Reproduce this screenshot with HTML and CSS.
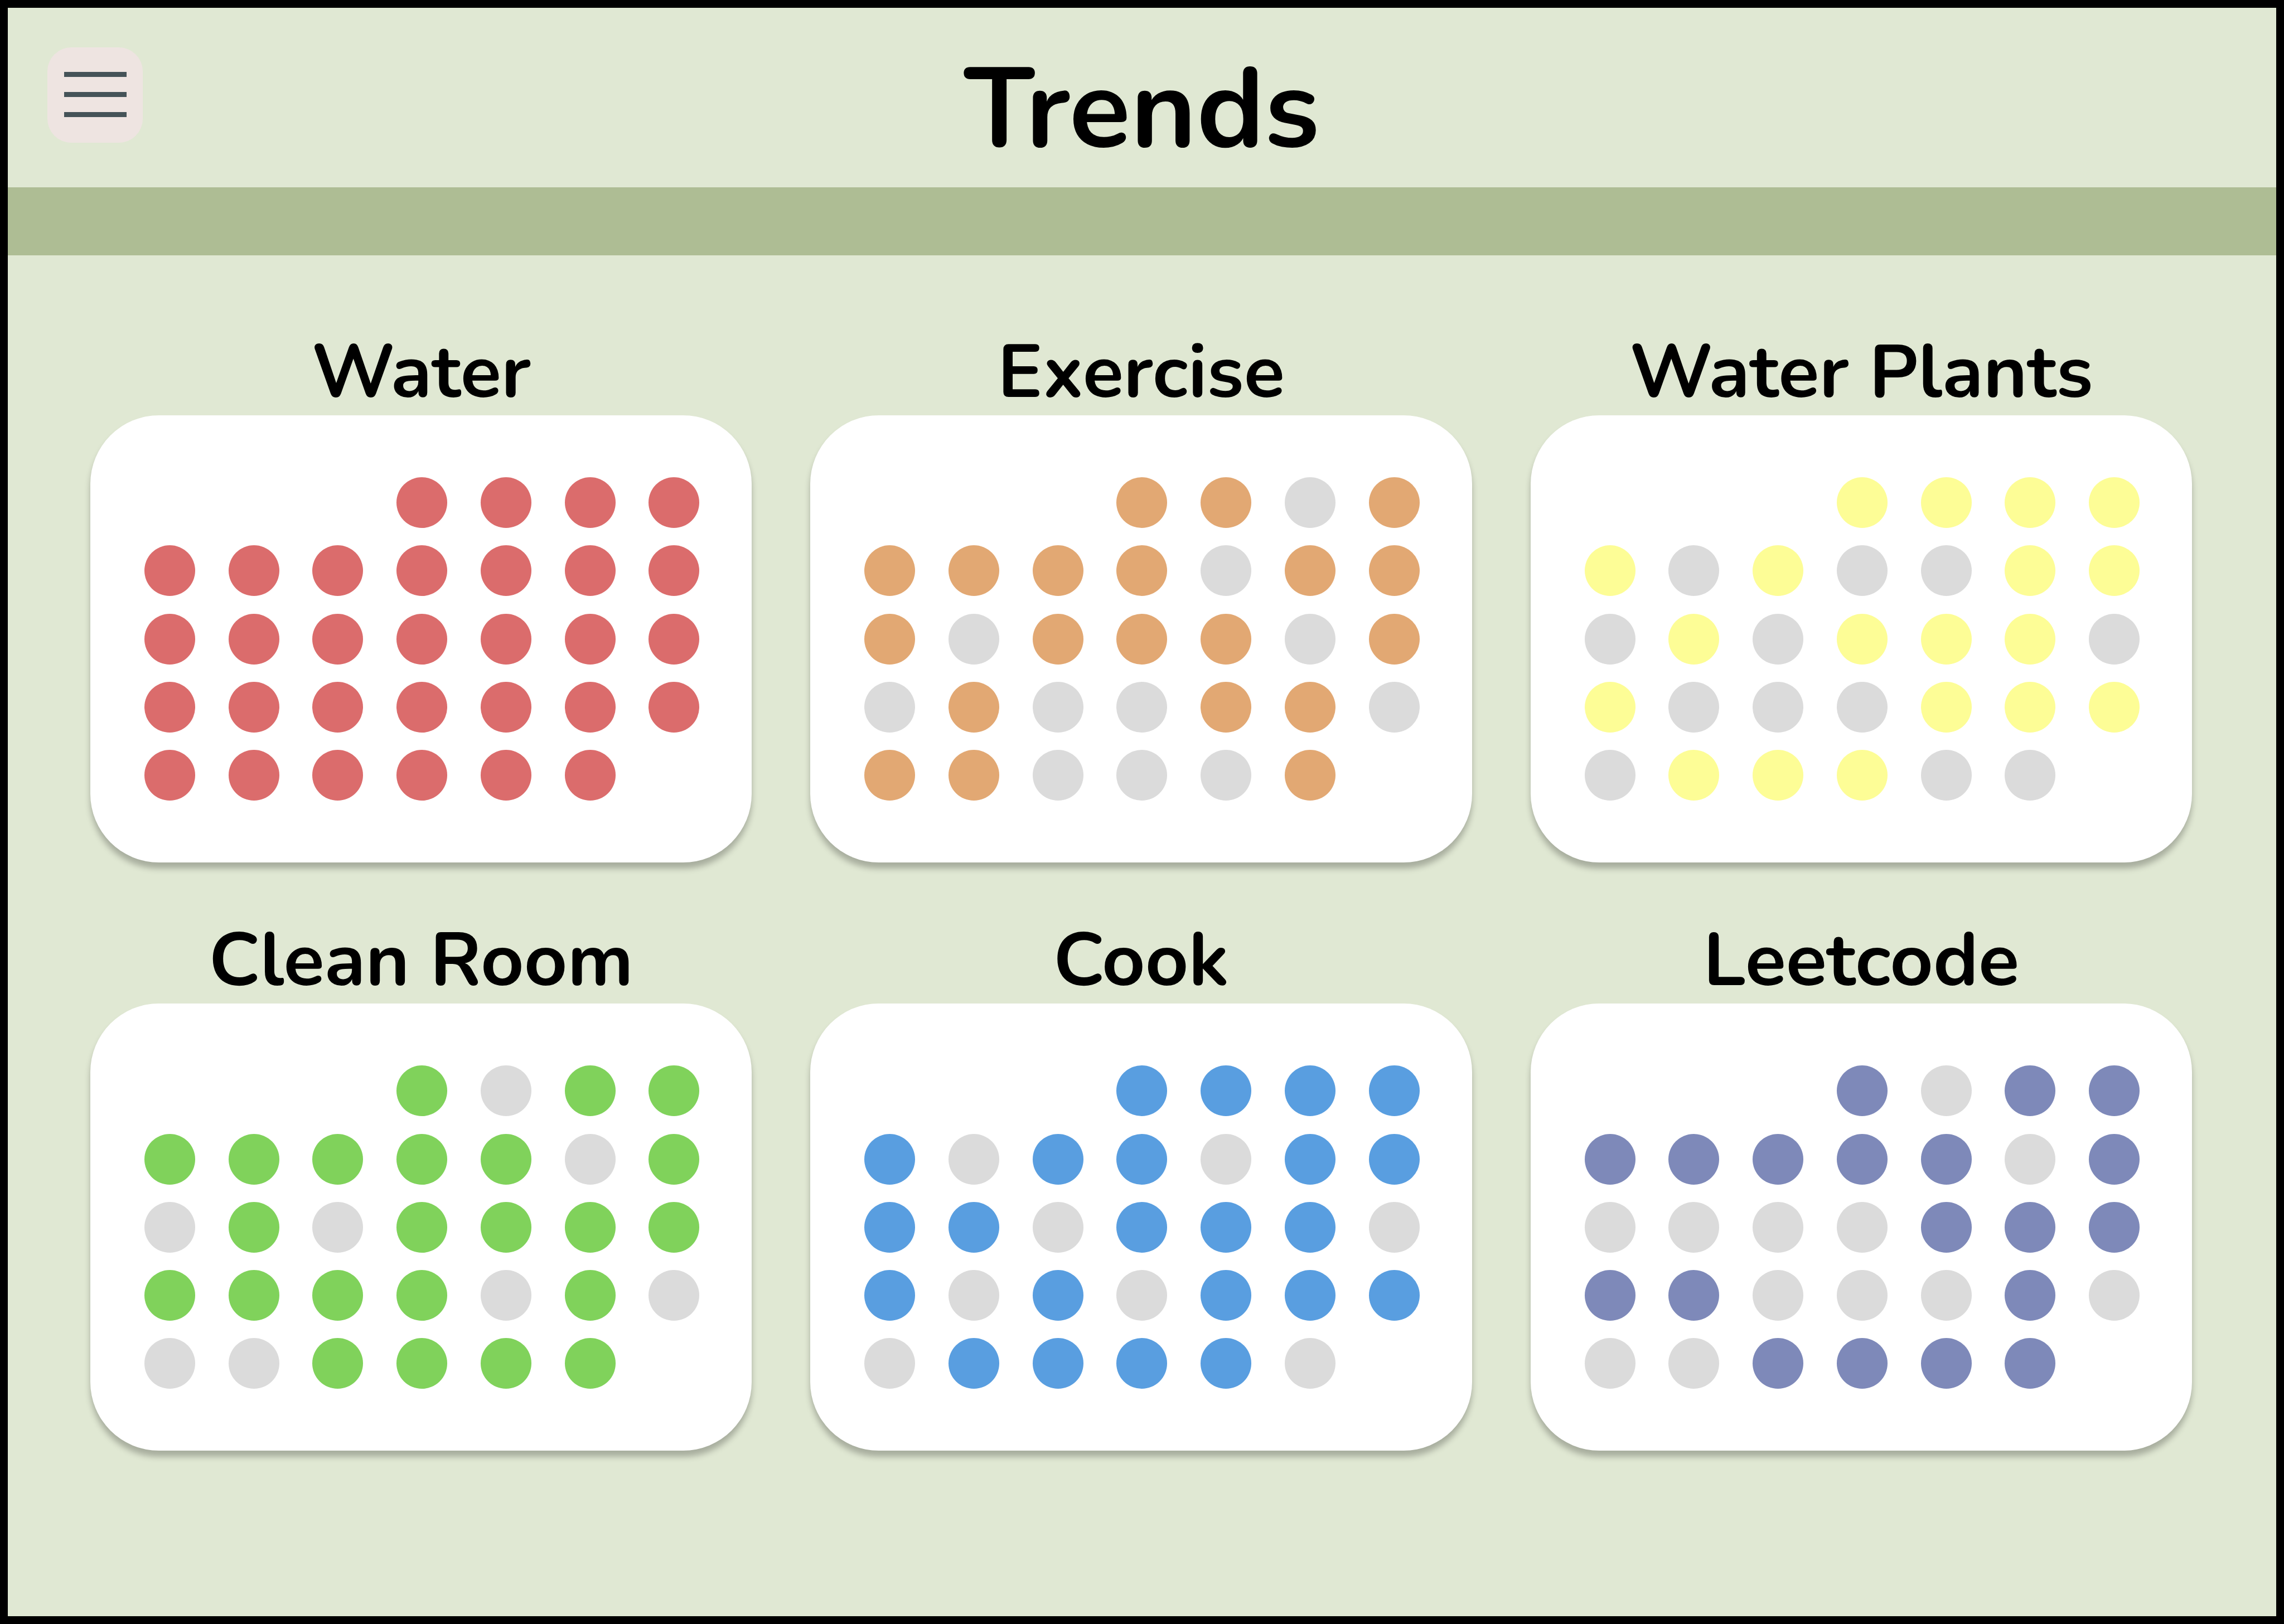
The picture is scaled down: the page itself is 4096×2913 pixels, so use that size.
FILE: index.html
```html
<!DOCTYPE html>
<html lang="en">
<head>
<meta charset="utf-8">
<meta name="viewport" content="width=device-width, initial-scale=1">
<title>Trends</title>
<link rel="stylesheet" href="styles.css">
</head>
<body>
<div class="page">
  <header class="header">
    <button class="menu" type="button" aria-label="Menu"><span class="bar"></span><span class="bar"></span><span class="bar"></span></button>
    <h1 class="title">Trends</h1>
  </header>
  <div class="band"></div>
  <main class="habits">
    <section class="habit water">
      <h2 class="name">Water</h2>
      <div class="card">
        <i class="day first done"></i><i class="day done"></i><i class="day done"></i><i class="day done"></i>
        <i class="day done"></i><i class="day done"></i><i class="day done"></i><i class="day done"></i><i class="day done"></i><i class="day done"></i><i class="day done"></i>
        <i class="day done"></i><i class="day done"></i><i class="day done"></i><i class="day done"></i><i class="day done"></i><i class="day done"></i><i class="day done"></i>
        <i class="day done"></i><i class="day done"></i><i class="day done"></i><i class="day done"></i><i class="day done"></i><i class="day done"></i><i class="day done"></i>
        <i class="day done"></i><i class="day done"></i><i class="day done"></i><i class="day done"></i><i class="day done"></i><i class="day done"></i>
      </div>
    </section>
    <section class="habit exercise">
      <h2 class="name">Exercise</h2>
      <div class="card">
        <i class="day first done"></i><i class="day done"></i><i class="day"></i><i class="day done"></i>
        <i class="day done"></i><i class="day done"></i><i class="day done"></i><i class="day done"></i><i class="day"></i><i class="day done"></i><i class="day done"></i>
        <i class="day done"></i><i class="day"></i><i class="day done"></i><i class="day done"></i><i class="day done"></i><i class="day"></i><i class="day done"></i>
        <i class="day"></i><i class="day done"></i><i class="day"></i><i class="day"></i><i class="day done"></i><i class="day done"></i><i class="day"></i>
        <i class="day done"></i><i class="day done"></i><i class="day"></i><i class="day"></i><i class="day"></i><i class="day done"></i>
      </div>
    </section>
    <section class="habit plants">
      <h2 class="name">Water Plants</h2>
      <div class="card">
        <i class="day first done"></i><i class="day done"></i><i class="day done"></i><i class="day done"></i>
        <i class="day done"></i><i class="day"></i><i class="day done"></i><i class="day"></i><i class="day"></i><i class="day done"></i><i class="day done"></i>
        <i class="day"></i><i class="day done"></i><i class="day"></i><i class="day done"></i><i class="day done"></i><i class="day done"></i><i class="day"></i>
        <i class="day done"></i><i class="day"></i><i class="day"></i><i class="day"></i><i class="day done"></i><i class="day done"></i><i class="day done"></i>
        <i class="day"></i><i class="day done"></i><i class="day done"></i><i class="day done"></i><i class="day"></i><i class="day"></i>
      </div>
    </section>
    <section class="habit clean">
      <h2 class="name">Clean Room</h2>
      <div class="card">
        <i class="day first done"></i><i class="day"></i><i class="day done"></i><i class="day done"></i>
        <i class="day done"></i><i class="day done"></i><i class="day done"></i><i class="day done"></i><i class="day done"></i><i class="day"></i><i class="day done"></i>
        <i class="day"></i><i class="day done"></i><i class="day"></i><i class="day done"></i><i class="day done"></i><i class="day done"></i><i class="day done"></i>
        <i class="day done"></i><i class="day done"></i><i class="day done"></i><i class="day done"></i><i class="day"></i><i class="day done"></i><i class="day"></i>
        <i class="day"></i><i class="day"></i><i class="day done"></i><i class="day done"></i><i class="day done"></i><i class="day done"></i>
      </div>
    </section>
    <section class="habit cook">
      <h2 class="name">Cook</h2>
      <div class="card">
        <i class="day first done"></i><i class="day done"></i><i class="day done"></i><i class="day done"></i>
        <i class="day done"></i><i class="day"></i><i class="day done"></i><i class="day done"></i><i class="day"></i><i class="day done"></i><i class="day done"></i>
        <i class="day done"></i><i class="day done"></i><i class="day"></i><i class="day done"></i><i class="day done"></i><i class="day done"></i><i class="day"></i>
        <i class="day done"></i><i class="day"></i><i class="day done"></i><i class="day"></i><i class="day done"></i><i class="day done"></i><i class="day done"></i>
        <i class="day"></i><i class="day done"></i><i class="day done"></i><i class="day done"></i><i class="day done"></i><i class="day"></i>
      </div>
    </section>
    <section class="habit leetcode">
      <h2 class="name">Leetcode</h2>
      <div class="card">
        <i class="day first done"></i><i class="day"></i><i class="day done"></i><i class="day done"></i>
        <i class="day done"></i><i class="day done"></i><i class="day done"></i><i class="day done"></i><i class="day done"></i><i class="day"></i><i class="day done"></i>
        <i class="day"></i><i class="day"></i><i class="day"></i><i class="day"></i><i class="day done"></i><i class="day done"></i><i class="day done"></i>
        <i class="day done"></i><i class="day done"></i><i class="day"></i><i class="day"></i><i class="day"></i><i class="day done"></i><i class="day"></i>
        <i class="day"></i><i class="day"></i><i class="day done"></i><i class="day done"></i><i class="day done"></i><i class="day done"></i>
      </div>
    </section>
  </main>
</div>
</body>
</html>
```
FILE: styles.css
```css
* { box-sizing: border-box; }

body {
  margin: 0;
  font-family: Nunito, Lato, sans-serif;
  color: #000;
}

.page {
  min-height: 100vh;
  border: 14px solid #000;
  background: #e0e8d3;
}

.header {
  display: grid;
  grid-template-columns: 171px 1fr 171px;
  align-items: start;
  padding: 71px 71px 0;
  height: 322px;
}

.menu {
  display: flex;
  flex-direction: column;
  align-items: center;
  gap: 27px;
  width: 171px;
  height: 171px;
  padding: 44px 0 0;
  border: 0;
  border-radius: 43px;
  background: #eee4e1;
  cursor: pointer;
}

.bar {
  width: 112px;
  height: 9px;
  background: #455358;
}

.title {
  margin: 0;
  font-size: 203px;
  font-weight: 750;
  line-height: 224px;
  text-align: center;
}

.band {
  height: 122px;
  background: #aebd94;
}

.habits {
  display: grid;
  grid-template-columns: repeat(3, 1fr);
  gap: 99px 105px;
  padding: 133px 151px 127px 148px;
}

.name {
  margin: 0;
  font-size: 135px;
  font-weight: 750;
  line-height: 154px;
  text-align: center;
}

.card {
  display: grid;
  grid-template-columns: repeat(7, 91px);
  justify-content: space-between;
  align-content: space-between;
  row-gap: 31px;
  aspect-ratio: 1186 / 802;
  padding: 111px 94px 111px 97px;
  border-radius: 123px;
  background: #fff;
  box-shadow: 0 11px 11px rgba(0, 0, 0, 0.25);
}

.day {
  height: 91px;
  border-radius: 50%;
  background: #dbdbdb;
}

.first { grid-column-start: 4; }

.water .done { background: #db6c6c; }
.exercise .done { background: #e2a873; }
.plants .done { background: #fdfd96; }
.clean .done { background: #80d25b; }
.cook .done { background: #599ee0; }
.leetcode .done { background: #7e89b9; }
```
